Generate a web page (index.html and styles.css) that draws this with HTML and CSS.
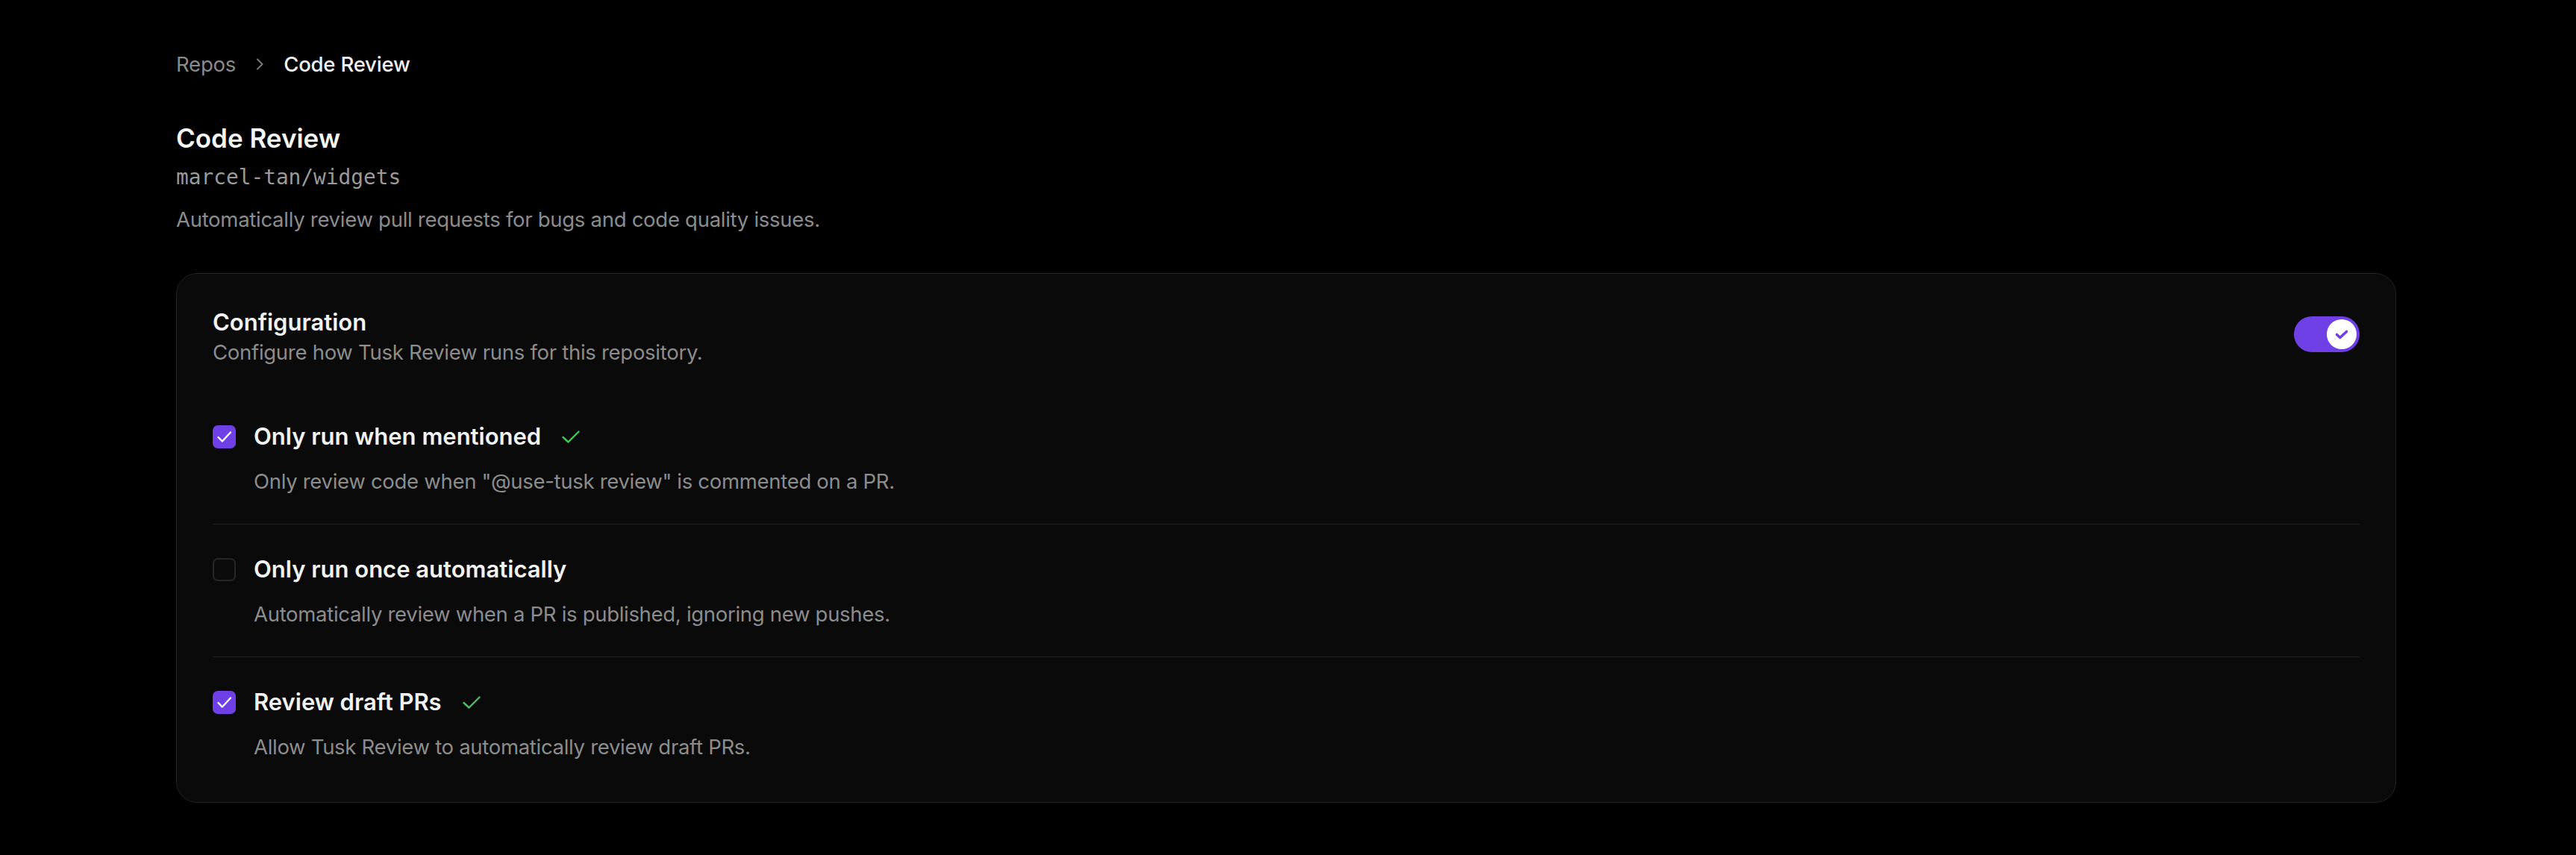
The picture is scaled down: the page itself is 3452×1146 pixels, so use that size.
FILE: index.html
```html
<!DOCTYPE html>
<html lang="en">
<head>
<meta charset="utf-8">
<title>Code Review</title>
<link rel="stylesheet" href="styles.css">
</head>
<body>
<main class="page">
  <nav class="crumbs">
    <span class="crumb-muted">Repos</span>
    <svg class="crumb-sep" width="10" height="16" viewBox="0 0 10 16"><polyline points="2,1.5 8.5,8 2,14.5" fill="none" stroke="#7a7a7a" stroke-width="2" stroke-linecap="round" stroke-linejoin="round"/></svg>
    <span class="crumb-current">Code Review</span>
  </nav>

  <header class="page-head">
    <h1 class="page-title">Code Review</h1>
    <div class="repo">marcel-tan/widgets</div>
    <p class="page-desc">Automatically review pull requests for bugs and code quality issues.</p>
  </header>

  <section class="card">
    <div class="card-head">
      <div class="card-head-text">
        <h2 class="card-title">Configuration</h2>
        <p class="card-sub">Configure how Tusk Review runs for this repository.</p>
      </div>
      <div class="toggle">
        <div class="knob">
          <svg width="40" height="40" viewBox="0 0 40 40"><polyline points="13.5,20.5 17.8,24.5 26.5,16.5" fill="none" stroke="#6e40e6" stroke-width="3.6" stroke-linecap="round" stroke-linejoin="round"/></svg>
        </div>
      </div>
    </div>

    <div class="items">
      <div class="item">
        <div class="item-row">
          <span class="box box-on"><svg width="31" height="31" viewBox="0 0 31 31"><polyline points="7.5,16 12.8,21.5 24,9.5" fill="none" stroke="#fff" stroke-width="2.4" stroke-linecap="round" stroke-linejoin="round"/></svg></span>
          <span class="item-title">Only run when mentioned</span>
          <svg class="ok" width="24" height="17" viewBox="0 0 24 17"><polyline points="1.5,9 8.5,15.5 22.5,1.5" fill="none" stroke="#45c35e" stroke-width="2.4" stroke-linecap="round" stroke-linejoin="round"/></svg>
        </div>
        <p class="item-desc">Only review code when "@use-tusk review" is commented on a PR.</p>
      </div>

      <div class="item">
        <div class="item-row">
          <span class="box"></span>
          <span class="item-title">Only run once automatically</span>
        </div>
        <p class="item-desc">Automatically review when a PR is published, ignoring new pushes.</p>
      </div>

      <div class="item">
        <div class="item-row">
          <span class="box box-on"><svg width="31" height="31" viewBox="0 0 31 31"><polyline points="7.5,16 12.8,21.5 24,9.5" fill="none" stroke="#fff" stroke-width="2.4" stroke-linecap="round" stroke-linejoin="round"/></svg></span>
          <span class="item-title">Review draft PRs</span>
          <svg class="ok" width="24" height="17" viewBox="0 0 24 17"><polyline points="1.5,9 8.5,15.5 22.5,1.5" fill="none" stroke="#45c35e" stroke-width="2.4" stroke-linecap="round" stroke-linejoin="round"/></svg>
        </div>
        <p class="item-desc">Allow Tusk Review to automatically review draft PRs.</p>
      </div>
    </div>
  </section>
</main>
</body>
</html>
```

FILE: styles.css
```css
* { box-sizing: border-box; }
html, body { margin: 0; padding: 0; background: #000; }
body {
  font-family: Inter, "Noto Sans", "Liberation Sans", sans-serif;
  color: #ededed;
}
.page {
  padding: 66px 241px 40px 236px;
}
.crumbs {
  display: flex;
  align-items: center;
  gap: 27px;
  height: 40px;
  font-size: 27.5px;
  line-height: 40px;
  letter-spacing: -0.2px;
}
.crumb-muted { color: #8a8a8a; }
.crumb-current { color: #f2f2f2; font-weight: 500; }
.crumb-sep { display: block; }

.page-head { margin-top: 57px; }
.page-title {
  margin: 0;
  font-size: 35px;
  line-height: 44px;
  font-weight: 600;
  color: #f5f5f5;
}
.repo {
  margin-top: 11px;
  font-family: "DejaVu Sans Mono", "Liberation Mono", monospace;
  font-size: 27.8px;
  line-height: 40px;
  color: #9a9a9a;
}
.page-desc {
  margin: 16px 0 0;
  font-size: 27.5px;
  line-height: 40px;
  letter-spacing: -0.28px;
  color: #8c8c8c;
}

.card {
  margin-top: 52px;
  background: #0a0a0a;
  border: 1px solid #222;
  border-radius: 28px;
  padding: 45px 48px 54px 48px;
}
.card-head {
  display: flex;
  justify-content: space-between;
  align-items: flex-start;
}
.card-title {
  margin: 0;
  font-size: 31px;
  line-height: 40px;
  font-weight: 600;
  color: #f2f2f2;
}
.card-sub {
  margin: 0;
  font-size: 27.5px;
  line-height: 40px;
  letter-spacing: -0.28px;
  color: #8c8c8c;
}
.toggle {
  margin-top: 12px;
  width: 88px;
  height: 48px;
  border-radius: 24px;
  background: #6e40e6;
  padding: 4px;
  display: flex;
  justify-content: flex-end;
}
.knob {
  width: 40px;
  height: 40px;
  border-radius: 50%;
  background: #fff;
}
.knob svg { display: block; }

.items { margin-top: 33px; }
.item {
  padding: 40px 0 37px;
  border-bottom: 1px solid #222;
}
.item:last-child {
  border-bottom: 0;
  padding-bottom: 0;
}
.item-row {
  display: flex;
  align-items: center;
  height: 40px;
}
.box {
  flex: 0 0 31px;
  width: 31px;
  height: 31px;
  border-radius: 7px;
  border: 2px solid #262626;
  background: #0b0b0b;
  margin-right: 24px;
}
.box-on {
  border: 0;
  background: #6e40e6;
}
.box svg { display: block; }
.item-title {
  font-size: 31px;
  line-height: 40px;
  font-weight: 600;
  color: #f2f2f2;
}
.ok { margin-left: 28px; display: block; }
.item-desc {
  margin: 20px 0 0 55px;
  font-size: 27.5px;
  line-height: 40px;
  letter-spacing: -0.3px;
  color: #8c8c8c;
}
```
